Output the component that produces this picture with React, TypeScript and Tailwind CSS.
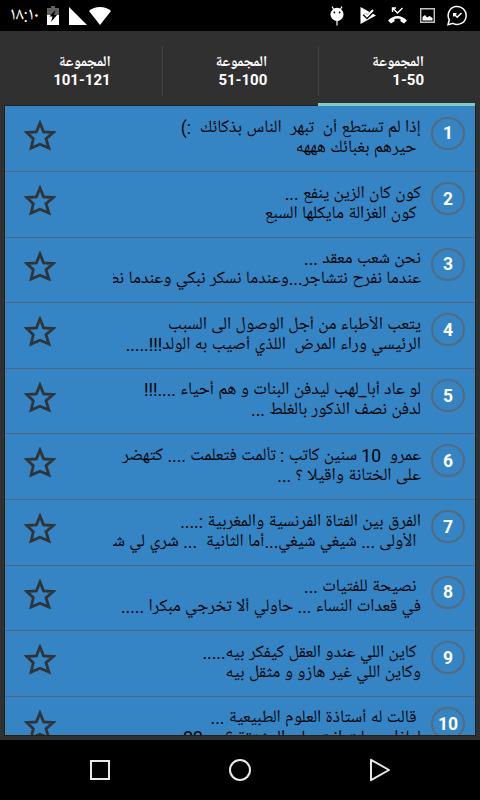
type Line = { text: string; indent?: boolean };
type Joke = { id: number; lines: Line[] };

const tabs = [
  { label: "المجموعة", range: "101-121", active: false },
  { label: "المجموعة", range: "51-100", active: false },
  { label: "المجموعة", range: "1-50", active: true },
];

const jokes: Joke[] = [
  { id: 1, lines: [{ text: "إذا لم تستطع أن  تبهر  الناس بذكائك  :)" }, { text: "حيرهم بغبائك هههه", indent: true }] },
  { id: 2, lines: [{ text: "كون كان الزين ينفع ..." }, { text: "كون الغزالة مايكلها السبع", indent: true }] },
  { id: 3, lines: [{ text: "نحن شعب معقد ..." }, { text: "عندما نفرح نتشاجر...وعندما نسكر نبكي وعندما نضحك" }] },
  { id: 4, lines: [{ text: "يتعب الأطباء من أجل الوصول الى السبب" }, { text: "الرئيسي وراء المرض  اللذي أصيب به الولد!!!....." }] },
  { id: 5, lines: [{ text: "لو عاد أبا_لهب ليدفن البنات و هم أحياء ....!!!" }, { text: "لدفن نصف الذكور بالغلط ..." }] },
  { id: 6, lines: [{ text: "عمرو  10 سنين كاتب : تألمت فتعلمت .... كتهضر" }, { text: "على الختانة واقيلا ؟ ..." }] },
  { id: 7, lines: [{ text: "الفرق بين الفتاة الفرنسية والمغربية :...." }, { text: "الأولى ... شيغي شيغي...أما الثانية  ... شري لي شري", indent: true }] },
  { id: 8, lines: [{ text: "نصيحة للفتيات ...", indent: true }, { text: "في قعدات النساء ... حاولي ألا تخرجي مبكرا ....." }] },
  { id: 9, lines: [{ text: "كاين اللي عندو العقل كيفكر بيه.....", indent: true }, { text: "وكاين اللي غير هازو و مثقل بيه" }] },
  { id: 10, lines: [{ text: "قالت له أستاذة العلوم الطبيعية ...", indent: true }, { text: "لماذا حصلت انت على المشتقة ؟ ... 22" }] },
];

function StatusBar() {
  return (
    <header className="flex h-[31px] shrink-0 items-center justify-between bg-black pr-[12px] pl-[10px] text-white">
      <div className="flex items-center">
        <span className="w-[28px] text-[18px] leading-[20px] whitespace-nowrap">١٨:١٠</span>
        <svg viewBox="0 0 12 19" className="ml-[9px] h-[19px] w-[12px]" aria-hidden>
          <path d="M4 0h4v2h4v17H0V2h4z" fill="#606060" />
          <path d="M0 9h12v10H0z" fill="#fff" />
          <path d="M8.5 4 2.5 10.5h3L4 16l6-7H7z" fill="#000" />
        </svg>
        <svg viewBox="0 0 18 18" className="ml-[10px] h-[18px] w-[18px]" fill="#fff" aria-hidden>
          <path d="M0 0v18h18z" />
        </svg>
        <svg viewBox="0 0 22 18" className="ml-[2px] h-[18px] w-[22px]" fill="#fff" aria-hidden>
          <path d="M11 18 0 4Q4.500 0 11 0T22 4z" />
        </svg>
      </div>
      <div className="flex items-center">
        <svg viewBox="0 0 14 20" className="h-[20px] w-[14px]" aria-hidden>
          <path d="M3.500 3 2 .6M10.500 3 12 .6M7 14v5.500" stroke="#fff" strokeWidth="1.200" />
          <ellipse cx="7" cy="8.300" rx="6.500" ry="6.600" fill="#fff" />
          <circle cx="4.400" cy="6.500" r=".9" fill="#000" />
          <circle cx="9.600" cy="6.500" r=".9" fill="#000" />
        </svg>
        <svg viewBox="0 0 16 17" className="ml-[16px] h-[17px] w-[16px]" aria-hidden>
          <path d="M.5 0 16 8.500.5 17z" fill="#fff" />
          <path d="m4 7 3 3 7-7" fill="none" stroke="#000" strokeWidth="3.600" />
          <path d="m4.500 6.500 2.500 2.700 6-6.200" fill="none" stroke="#fff" strokeWidth="2" />
        </svg>
        <svg viewBox="0 0 19 17" className="ml-[12px] h-[17px] w-[19px]" aria-hidden>
          <path d="M0 13.500C3 10.500 6 9 9.500 9s6.500 1.500 9.500 4.500l-3 3-3.500-2.200V12a12 12 0 0 0-6 0v2.300L3 16.500z" fill="#fff" />
          <path d="m5 1.500 4.500 4.500L14.500 1M4.500 5V1H8" fill="none" stroke="#fff" strokeWidth="1.400" />
        </svg>
        <svg viewBox="0 0 15 15" className="ml-[13px] h-[15px] w-[15px]" aria-hidden>
          <path d="M.7.7h13.600v13.600H.7z" fill="none" stroke="#c4c4c4" strokeWidth="1.400" />
          <path d="M2.500 12.500V9l2.500-2 2 2.500 2.500-1.500 3 2v2.500z" fill="#fff" />
        </svg>
        <svg viewBox="0 0 21 21" className="ml-[12px] h-[21px] w-[21px]" fill="none" stroke="#fff" strokeWidth="1.500" aria-hidden>
          <path d="m1 19.800 1.300-5A9 9 0 1 1 6 18.400z" />
          <path d="m7 9 3.200 3.200L14.500 8M6.800 11.500V8.800H9.500" strokeWidth="1.500" />
        </svg>
      </div>
    </header>
  );
}

function TabBar() {
  return (
    <nav className="relative z-10 mx-[5px] flex h-[75px] shrink-0">
      {tabs.map((tab, i) => (
        <div
          key={tab.range}
          className={`flex flex-1 flex-col border-b-[3px] ${tab.active ? "border-[#80cbc4]" : "border-transparent"}`}>
          <div
            className={`mt-[15px] flex h-[50px] flex-col items-end justify-center pr-[51px] text-[15px] leading-[18px] font-bold text-white ${i > 0 ? "border-l border-[#434343]" : ""}`}>
            <span dir="rtl" className="relative top-px">{tab.label}</span>
            <span>{tab.range}</span>
          </div>
        </div>
      ))}
    </nav>
  );
}

function JokeRow({ joke }: { joke: Joke }) {
  return (
    <li dir="rtl" className="flex h-[65.6px] shrink-0 border-b border-[#4c6780] pr-[10px] pl-[19px]">
      <span className="mt-[10px] flex h-[33px] w-[34px] shrink-0 items-center justify-center rounded-full border-2 border-[#546a7d] pt-[2px] text-[17.5px] leading-none font-bold text-white">
        {joke.id}
      </span>
      <div className="mt-[11.5px] mr-[10px] h-[50px] w-[308px] shrink-0 overflow-hidden text-[17.5px] leading-[20px] whitespace-pre text-black">
        {joke.lines.map((line) => (
          <p key={line.text} className={line.indent ? "pr-[4.500px]" : ""}>
            {line.text}
          </p>
        ))}
      </div>
      <svg
        viewBox="0 0 32 32"
        className="mt-[13px] mr-auto h-[32px] w-[32px]"
        fill="none"
        stroke="#303436"
        strokeWidth="2.800"
        aria-hidden>
        <path d="m16 3 3.600 8.800 9.600.7-7.200 6.200 2.900 9.300-8.900-3.800L7.100 28l2.200-9.300-6.500-6.200 9.600-.7z" />
      </svg>
    </li>
  );
}

function NavBar() {
  return (
    <footer className="flex h-[60px] shrink-0 items-center justify-between bg-black px-[89px]">
      <svg viewBox="0 0 22 22" className="h-[22px] w-[22px]" fill="none" stroke="#e8e8e8" strokeWidth="2" aria-hidden>
        <rect x="2" y="2" width="18" height="18" />
      </svg>
      <svg viewBox="0 0 24 24" className="h-[24px] w-[24px]" fill="none" stroke="#e8e8e8" strokeWidth="2" aria-hidden>
        <circle cx="12" cy="12" r="10" />
      </svg>
      <svg viewBox="0 0 22 24" className="h-[24px] w-[22px]" fill="none" stroke="#e8e8e8" strokeWidth="2" strokeLinejoin="round" aria-hidden>
        <path d="M2 1.800v20.400L20 12z" />
      </svg>
    </footer>
  );
}

export default function App() {
  return (
    <div className="flex h-[800px] w-[480px] flex-col overflow-hidden bg-[#303030] font-['Roboto','Noto_Naskh_Arabic_UI','Noto_Naskh_Arabic',sans-serif]">
      <StatusBar />
      <TabBar />
      <ul className="mx-[5px] mb-[5px] flex h-[629px] shrink-0 flex-col overflow-hidden bg-[#3584c4] pt-[0.5px] shadow-[0_0_0_1px_#252014]">
        {jokes.map((joke) => (
          <JokeRow key={joke.id} joke={joke} />
        ))}
      </ul>
      <NavBar />
    </div>
  );
}
